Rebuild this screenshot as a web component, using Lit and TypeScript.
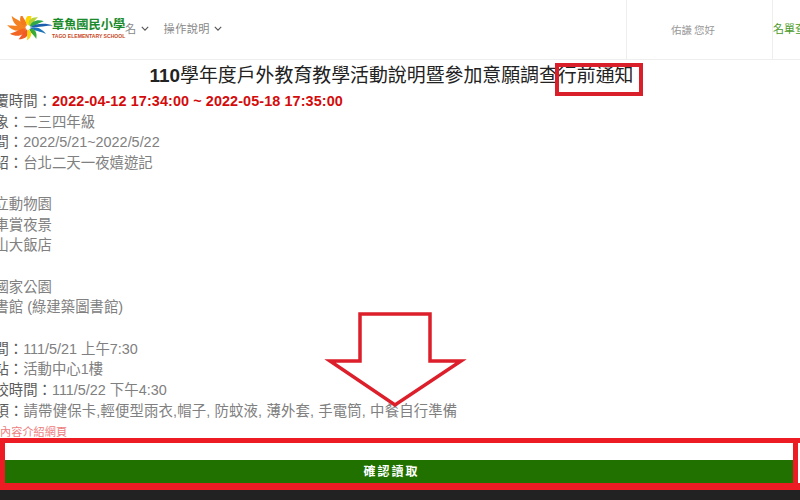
import { LitElement, html, css, svg } from "lit";
import { customElement } from "lit/decorators.js";

const petals: [number, number, number, string][] = [
  [-178, 21, 6, "#f58220"],
  [-150, 20, 6.5, "#f58220"],
  [-122, 15, 6, "#f47a1f"],
  [155, 19, 6.5, "#f26522"],
  [122, 15, 6, "#ef5a28"],
  [-80, 15, 6, "#ffd400"],
  [-52, 14, 5, "#b5d334"],
  [-26, 17, 4.5, "#2ea84a"],
  [-7, 25, 3.6, "#1c5fae"],
  [16, 19, 4, "#1b75bc"],
  [48, 14, 5, "#39a935"],
  [88, 13, 5, "#f6d50e"],
];

const chevron = html`<svg class="chev" viewBox="0 0 10 6" aria-hidden="true"><path d="M1 1l4 4 4-4" fill="none" stroke="#555" stroke-width="1.4"/></svg>`;

@customElement("app-root")
export class AppRoot extends LitElement {
  static styles = css`
    :host {
      display: block;
      position: relative;
      width: 800px;
      height: 500px;
      overflow: hidden;
      background: #fff;
      font-family: "Liberation Sans", "Noto Sans CJK TC", sans-serif;
    }
    .page { display: flex; flex-direction: column; height: 500px; }
    header {
      display: flex;
      height: 59px;
      flex: none;
      border-bottom: 1px solid #eee;
      align-items: stretch;
      color: #888;
      font-size: 11px;
    }
    .brand { display: flex; align-items: center; padding: 0 0 2px 7px; width: 118px; flex: none; }
    .mark { width: 46px; height: 26px; flex: none; margin-right: -1px; }
    .names { display: flex; flex-direction: column; width: 74px; flex: none; }
    .zh { font-size: 12.2px; line-height: 14px; font-weight: 700; color: #1a8a2a; white-space: nowrap; }
    .en { font-size: 5.1px; line-height: 8px; font-weight: 700; color: #c8461c; white-space: nowrap; }
    nav { display: flex; gap: 15px; align-items: center; flex: 1; padding-bottom: 3px; }
    .item { display: flex; align-items: center; gap: 4px; letter-spacing: .4px; font-size: 11.2px; }
    .chev { width: 8px; height: 5px; }
    .user { width: 146px; border-left: 1px solid #eee; display: flex; align-items: center; justify-content: center; padding-right: 13px; box-sizing: border-box; font-size: 10.5px; color: #999; gap: 2px; }
    .list { flex: none; width: 27px; border-left: 1px solid #eee; display: flex; align-items: center; color: #4c9a2a; overflow: hidden; white-space: nowrap; padding-bottom: 4px; font-size: 11px; }
    main { flex: 1; overflow: hidden; min-height: 0; }
    h1 { margin: 0; font-size: 18.9px; line-height: 31px; height: 31px; text-align: center; font-weight: 400; color: #222; width: 783px; white-space: nowrap; }
    h1 b { font-weight: 700; }
    .lines { margin-left: -20px; font-size: 14.4px; line-height: 20.65px; color: #808080; white-space: nowrap; }
    .row { height: 20.65px; }
    .row b { font-weight: 400; color: #5c5c5c; }
    .row .due { color: #d40b0b; font-weight: 700; letter-spacing: .1px; }
    .notes { letter-spacing: .14px; }
    .lnk { color: #ee8080; font-size: 11.2px; margin-left: 20px; }
    .act { flex: none; height: 23px; margin: 0 7px 7px 5px; padding: 0 15px 3px 0; box-sizing: border-box; background: #217100; color: #fff; font-size: 12px; font-weight: 700; letter-spacing: 2px; display: flex; align-items: center; justify-content: center; }
    .base { flex: none; height: 10px; background: #222; }
    .ink { position: absolute; inset: 0; width: 800px; height: 500px; pointer-events: none; }
  `;

  render() {
    const mark = petals.map(([a, l, w, c]) => svg`<path transform="translate(21 11.5) rotate(${a})" d="M2 0 C ${l * 0.35} ${-w}, ${l * 0.75} ${-w * 0.7}, ${l} ${w * 0.3} C ${l * 0.7} ${w * 0.1}, ${l * 0.35} ${w * 0.4}, 2 0 Z" fill=${c}/>`);
    return html`
      <div class="page">
        <header>
          <div class="brand">
            <svg class="mark" viewBox="0 0 46 26" aria-hidden="true">${mark}</svg>
            <div class="names"><span class="zh">章魚國民小學</span><span class="en">TAGO ELEMENTARY SCHOOL</span></div>
          </div>
          <nav>
            <span class="item">名 ${chevron}</span>
            <span class="item">操作說明 ${chevron}</span>
          </nav>
          <div class="user"><span>佑謙</span><span>您好</span></div>
          <div class="list">名單查詢</div>
        </header>
        <main>
          <h1><b>110</b>學年度戶外教育教學活動說明暨參加意願調查行前通知</h1>
          <div class="lines">
            <div class="row"><b>填覆時間：</b><b class="due">2022-04-12 17:34:00 ~ 2022-05-18 17:35:00</b></div>
            <div class="row"><b>對象：</b>二三四年級</div>
            <div class="row"><b>時間：</b>2022/5/21~2022/5/22</div>
            <div class="row"><b>介紹：</b>台北二天一夜嬉遊記</div>
            <div class="row"></div>
            <div class="row">市立動物園</div>
            <div class="row">搭車賞夜景</div>
            <div class="row">圓山大飯店</div>
            <div class="row"></div>
            <div class="row">陽國家公園</div>
            <div class="row">圖書館 (綠建築圖書館)</div>
            <div class="row"></div>
            <div class="row"><b>時間：</b>111/5/21 上午7:30</div>
            <div class="row"><b>車站：</b>活動中心1樓</div>
            <div class="row"><b>返校時間：</b>111/5/22 下午4:30</div>
            <div class="row notes"><b>事項：</b>請帶健保卡,輕便型雨衣,帽子, 防蚊液, 薄外套, 手電筒, 中餐自行準備</div>
            <div class="row"><span class="lnk">內容介紹網頁</span></div>
          </div>
        </main>
        <div class="act">確認讀取</div>
        <div class="base"></div>
      </div>
      <svg class="ink" viewBox="0 0 800 500" aria-hidden="true">
        <rect x="557" y="65" width="84" height="29" fill="none" stroke="#d9202a" stroke-width="4"/>
        <path d="M360 314H430V361H461L395 405L330 361H360Z" fill="none" stroke="#dc1f2a" stroke-width="3.5"/>
        <rect x="0" y="438" width="800" height="5" fill="#ed1c24"/>
        <rect x="0" y="483" width="800" height="7" fill="#ed1c24"/>
        <rect x="0" y="438" width="5" height="52" fill="#ed1c24"/>
        <rect x="793" y="438" width="5" height="52" fill="#ed1c24"/>
      </svg>
    `;
  }
}
